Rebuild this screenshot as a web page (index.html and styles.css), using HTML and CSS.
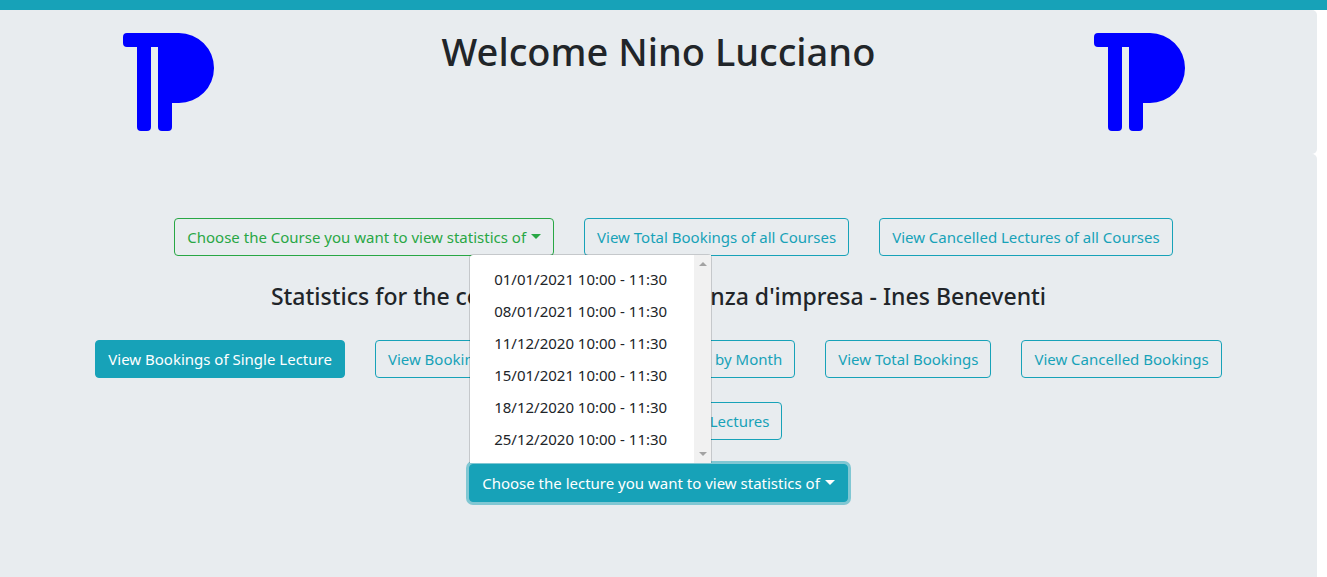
FILE: index.html
```
<!DOCTYPE html>
<html lang="en">
<head>
<meta charset="utf-8">
<meta name="viewport" content="width=device-width, initial-scale=1">
<title>Statistics</title>
<link rel="stylesheet" href="styles.css">
</head>
<body>
<div class="topbar"></div>
<header class="panel header">
  <svg class="logo" viewBox="0 0 100 100" aria-hidden="true"><path d="M4 0H56A35 35 0 0 1 56 70H49V94Q49 98 45 98H39Q35 98 35 94V14H28V94Q28 98 24 98H18Q14 98 14 94V14H4Q0 14 0 10V4Q0 0 4 0Z"/></svg>
  <h1 class="title">Welcome Nino Lucciano</h1>
  <svg class="logo" viewBox="0 0 100 100" aria-hidden="true"><path d="M4 0H56A35 35 0 0 1 56 70H49V94Q49 98 45 98H39Q35 98 35 94V14H28V94Q28 98 24 98H18Q14 98 14 94V14H4Q0 14 0 10V4Q0 0 4 0Z"/></svg>
</header>
<main class="panel main">
  <div class="row courses">
    <button type="button" class="btn success caret">Choose the Course you want to view statistics of</button>
    <button type="button" class="btn">View Total Bookings of all Courses</button>
    <button type="button" class="btn">View Cancelled Lectures of all Courses</button>
  </div>
  <h2 class="subtitle">Statistics for the course Economia e finanza d'impresa - Ines Beneventi</h2>
  <div class="row">
    <button type="button" class="btn filled">View Bookings of Single Lecture</button>
    <button type="button" class="btn">View Bookings by Week</button>
    <button type="button" class="btn">View Bookings by Month</button>
    <button type="button" class="btn">View Total Bookings</button>
    <button type="button" class="btn">View Cancelled Bookings</button>
    <button type="button" class="btn">View Total Bookings of Lectures</button>
  </div>
  <div class="dropup">
    <button type="button" class="btn filled focused caret" aria-expanded="true">Choose the lecture you want to view statistics of</button>
    <div class="menu">
      <div class="items">
        <a class="item" href="#">01/01/2021 10:00 - 11:30</a>
        <a class="item" href="#">08/01/2021 10:00 - 11:30</a>
        <a class="item" href="#">11/12/2020 10:00 - 11:30</a>
        <a class="item" href="#">15/01/2021 10:00 - 11:30</a>
        <a class="item" href="#">18/12/2020 10:00 - 11:30</a>
        <a class="item" href="#">25/12/2020 10:00 - 11:30</a>
      </div>
      <div class="scroll">
        <svg width="8" height="4" viewBox="0 0 8 4"><path d="M0 4L4 0L8 4Z"/></svg>
        <svg width="8" height="4" viewBox="0 0 8 4"><path d="M0 0L4 4L8 0Z"/></svg>
      </div>
    </div>
  </div>
</main>
</body>
</html>
```
FILE: styles.css
```
* { box-sizing: border-box; }
body {
  margin: 0;
  min-height: 100vh;
  display: flex;
  flex-direction: column;
  background: #fff;
  color: #212529;
  font-family: "Segoe UI", "Noto Sans", "Open Sans", sans-serif;
  font-size: 15px;
  line-height: 24px;
}
.topbar { height: 10px; background: #17a2b8; }
.panel { margin-right: 10px; background: #e8ecef; border-radius: 0 5px 5px 0; }
.header {
  display: grid;
  grid-template-columns: 1fr 2fr 1fr;
  justify-items: center;
  padding: 18px 11px 21px;
}
.logo { width: 100px; height: 100px; margin-top: 5px; fill: #00f; }
.title { margin: 0; font-size: 38px; font-weight: 500; line-height: 46px; }
.main {
  flex: 1;
  display: flex;
  flex-direction: column;
  align-items: center;
  padding: 64px 64px 75px;
  border-radius: 0 5px 0 0;
}
.row { display: flex; flex-wrap: wrap; justify-content: center; gap: 24px 30px; }
.courses { padding-left: 30px; }
.subtitle { margin: 26px 0 30px; font-size: 23px; font-weight: 500; line-height: 28px; }
.btn {
  display: inline-flex;
  align-items: center;
  padding: 6px 12px;
  border: 1px solid #17a2b8;
  border-radius: 4px;
  background: transparent;
  color: #17a2b8;
  font: inherit;
  cursor: pointer;
}
.success { border-color: #28a745; color: #28a745; }
.filled { background: #17a2b8; color: #fff; }
.focused { box-shadow: 0 0 0 3px rgba(23, 162, 184, 0.5); }
.caret::after {
  content: "";
  margin: 0 0 2px 5px;
  border-top: 5px solid;
  border-left: 5px solid transparent;
  border-right: 5px solid transparent;
}
.dropup { position: relative; margin-top: 24px; }
.menu {
  position: absolute;
  left: 0;
  bottom: 100%;
  margin-bottom: 1px;
  display: flex;
  min-width: 243px;
  border: 1px solid rgba(0, 0, 0, 0.15);
  border-radius: 4px 4px 0 0;
  border-bottom: 0;
  background: #fff;
  background-clip: padding-box;
}
.items { flex: 1; padding: 8px 0; }
.item {
  display: block;
  padding: 4px 24px;
  color: #212529;
  text-decoration: none;
  white-space: nowrap;
}
.scroll {
  width: 17px;
  display: flex;
  flex-direction: column;
  justify-content: space-between;
  align-items: center;
  padding: 7px 0;
  background: #f1f1f1;
  fill: #a3a3a3;
}
```
